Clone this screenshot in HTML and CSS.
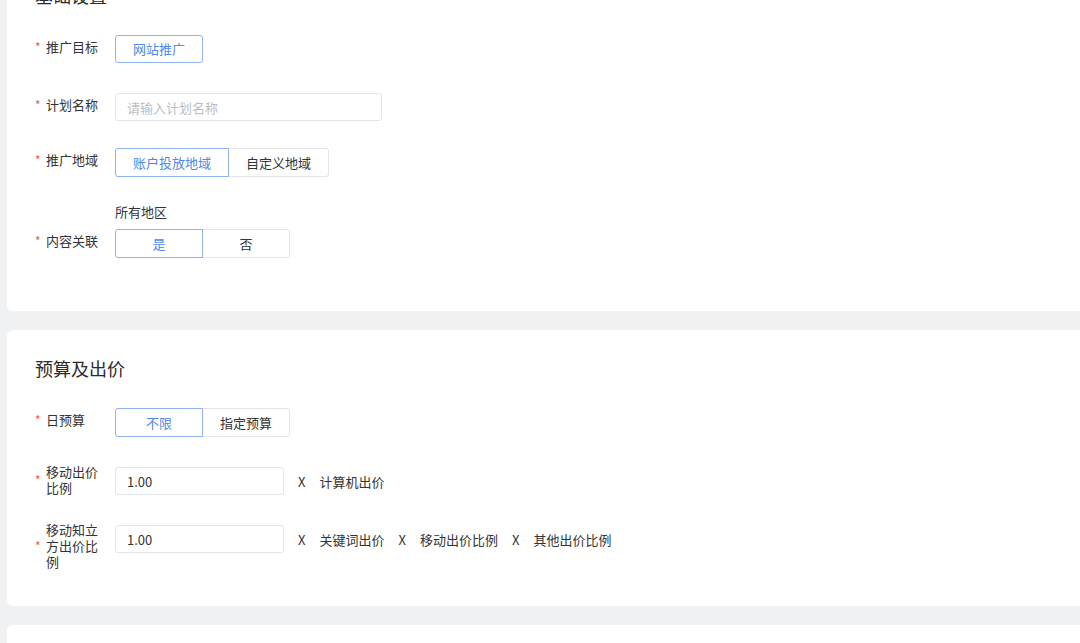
FILE: index.html
```html
<!DOCTYPE html>
<html>
<head>
<meta charset="utf-8">
<meta name="viewport" content="width=device-width, initial-scale=1.0">
<link rel="stylesheet" href="styles.css">
<title>新建计划</title>
</head>
<body>
<div class="page">

  <!-- 基础设置 -->
  <div class="card">
    <h2 class="card-title">基础设置</h2>

    <div class="form-row">
      <div class="label-col"><div class="label"><span class="star">*</span><span class="label-text">推广目标</span></div></div>
      <div class="control">
        <button class="btn active">网站推广</button>
      </div>
    </div>

    <div class="form-row tight">
      <div class="label-col"><div class="label"><span class="star">*</span><span class="label-text">计划名称</span></div></div>
      <div class="control">
        <input class="input wide" placeholder="请输入计划名称">
      </div>
    </div>

    <div class="form-row with-hint">
      <div class="label-col"><div class="label"><span class="star">*</span><span class="label-text">推广地域</span></div></div>
      <div class="control">
        <div class="seg">
          <span class="seg-item active">账户投放地域</span>
          <span class="seg-item">自定义地域</span>
        </div>
        <div class="hint">所有地区</div>
      </div>
    </div>

    <div class="form-row">
      <div class="label-col"><div class="label"><span class="star">*</span><span class="label-text">内容关联</span></div></div>
      <div class="control">
        <div class="seg">
          <span class="seg-item active">是</span>
          <span class="seg-item">否</span>
        </div>
      </div>
    </div>
  </div>

  <!-- 预算及出价 -->
  <div class="card">
    <h2 class="card-title">预算及出价</h2>

    <div class="form-row">
      <div class="label-col"><div class="label"><span class="star">*</span><span class="label-text">日预算</span></div></div>
      <div class="control">
        <div class="seg">
          <span class="seg-item active">不限</span>
          <span class="seg-item">指定预算</span>
        </div>
      </div>
    </div>

    <div class="form-row">
      <div class="label-col"><div class="label multi"><span class="star">*</span><span class="label-text">移动出价比例</span></div></div>
      <div class="control inline">
        <input class="input short" value="1.00">
        <span class="times">X</span>
        <span class="formula">计算机出价</span>
      </div>
    </div>

    <div class="form-row">
      <div class="label-col"><div class="label multi"><span class="star">*</span><span class="label-text">移动知立方出价比例</span></div></div>
      <div class="control inline">
        <input class="input short" value="1.00">
        <span class="times">X</span>
        <span class="formula">关键词出价</span>
        <span class="times">X</span>
        <span class="formula">移动出价比例</span>
        <span class="times">X</span>
        <span class="formula">其他出价比例</span>
      </div>
    </div>
  </div>

  <div class="card empty"></div>

</div>
</body>
</html>
```

FILE: styles.css
```css
* {
  box-sizing: border-box;
}

body {
  margin: 0;
  background-color: #f0f1f3;
  font-family: "Noto Sans CJK SC", "Noto Sans", sans-serif;
  font-size: 13px;
  color: #333333;
  overflow: hidden;
}

.page {
  margin-top: -43px;
  padding-left: 7px;
}

.card {
  background-color: #ffffff;
  border-radius: 6px;
  margin-right: -20px;
  margin-bottom: 19px;
  padding: 29px 28px 23px 28px;
}

.card.empty {
  min-height: 120px;
}

.card-title {
  margin: 0 0 31px 0;
  font-size: 18px;
  line-height: 18px;
  font-weight: 400;
  color: #2b2b2b;
}

/* one line of the form */
.form-row {
  display: flex;
  align-items: flex-start;
  margin-bottom: 30px;
}

.form-row.tight {
  margin-bottom: 27px;
}

.form-row.with-hint {
  margin-bottom: 9px;
}

.label-col {
  width: 80px;
  height: 28px;
  flex-shrink: 0;
}

.label {
  display: flex;
  align-items: center;
  margin-top: 4px;
}

.label.multi {
  margin-top: -3px;
}

.star {
  width: 11px;
  flex-shrink: 0;
  color: #f0584a;
  font-size: 12px;
  line-height: 12px;
}

.label-text {
  width: 54px;
  line-height: 16px;
  color: #333333;
}

.control.inline {
  display: flex;
  align-items: center;
  gap: 14px;
}

.btn {
  height: 28px;
  padding: 0 17px;
  font-family: inherit;
  font-size: 13px;
  line-height: 26px;
  background-color: #ffffff;
  border: 1px solid #8fb1f1;
  border-radius: 3px;
  color: #4f87ea;
}

.input {
  height: 28px;
  padding: 0 11px;
  font-family: inherit;
  font-size: 13px;
  color: #333333;
  border: 1px solid #e3e5e9;
  border-radius: 3px;
  outline: none;
}

.input::placeholder {
  color: #bdbdbd;
}

.input.wide {
  width: 267px;
}

.input.short {
  width: 169px;
}

/* segmented switch */
.seg {
  display: flex;
}

.seg-item {
  position: relative;
  min-width: 88px;
  height: 29px;
  padding: 0 17px;
  line-height: 27px;
  text-align: center;
  border: 1px solid #e3e5e9;
  background-color: #ffffff;
  color: #333333;
  margin-left: -1px;
}

.seg-item:first-child {
  margin-left: 0;
  border-radius: 3px 0 0 3px;
}

.seg-item:last-child {
  border-radius: 0 3px 3px 0;
}

.seg-item.active {
  z-index: 1;
  border-color: #8fb1f1;
  color: #4f87ea;
}

.hint {
  margin-top: 27px;
  line-height: 16px;
  color: #333333;
}

.times {
  color: #333333;
}

.formula {
  color: #333333;
}
```
